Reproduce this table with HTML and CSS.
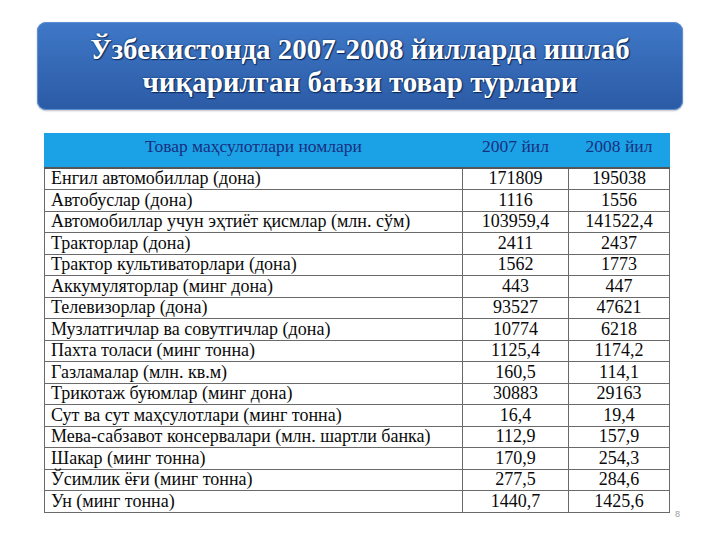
FILE: index.html
```html
<!DOCTYPE html>
<html lang="uz">
<head>
<meta charset="utf-8">
<title>Товар турлари</title>
<link rel="stylesheet" href="styles.css">
</head>
<body>
<div class="slide">
  <div class="title">Ўзбекистонда 2007-2008 йилларда ишлаб<br>чиқарилган баъзи товар турлари</div>
  <div class="tablewrap">
    <table class="data">
      <thead>
        <tr><th class="name">Товар маҳсулотлари номлари</th><th>2007 йил</th><th>2008 йил</th></tr>
      </thead>
      <tbody>
        <tr><td class="name">Енгил автомобиллар (дона)</td><td>171809</td><td>195038</td></tr>
        <tr><td class="name">Автобуслар (дона)</td><td>1116</td><td>1556</td></tr>
        <tr><td class="name">Автомобиллар учун эҳтиёт қисмлар (млн. сўм)</td><td>103959,4</td><td>141522,4</td></tr>
        <tr><td class="name">Тракторлар (дона)</td><td>2411</td><td>2437</td></tr>
        <tr><td class="name">Трактор культиваторлари (дона)</td><td>1562</td><td>1773</td></tr>
        <tr><td class="name">Аккумуляторлар (минг дона)</td><td>443</td><td>447</td></tr>
        <tr><td class="name">Телевизорлар (дона)</td><td>93527</td><td>47621</td></tr>
        <tr><td class="name">Музлатгичлар ва совутгичлар (дона)</td><td>10774</td><td>6218</td></tr>
        <tr><td class="name">Пахта толаси (минг тонна)</td><td>1125,4</td><td>1174,2</td></tr>
        <tr><td class="name">Газламалар (млн. кв.м)</td><td>160,5</td><td>114,1</td></tr>
        <tr><td class="name">Трикотаж буюмлар (минг дона)</td><td>30883</td><td>29163</td></tr>
        <tr><td class="name">Сут ва сут маҳсулотлари (минг тонна)</td><td>16,4</td><td>19,4</td></tr>
        <tr><td class="name">Мева-сабзавот консервалари (млн. шартли банка)</td><td>112,9</td><td>157,9</td></tr>
        <tr><td class="name">Шакар (минг тонна)</td><td>170,9</td><td>254,3</td></tr>
        <tr><td class="name">Ўсимлик ёғи (минг тонна)</td><td>277,5</td><td>284,6</td></tr>
        <tr><td class="name">Ун (минг тонна)</td><td>1440,7</td><td>1425,6</td></tr>
      </tbody>
    </table>
    <span class="pagenum">8</span>
  </div>
</div>
</body>
</html>
```

FILE: styles.css
```css
html, body {
  margin: 0;
  padding: 0;
  background: #ffffff;
}
body {
  width: 720px;
  height: 540px;
  overflow: hidden;
  font-family: "Liberation Serif", "Times New Roman", serif;
}
.slide {
  display: flex;
  flex-direction: column;
  padding: 22px 0 0 37px;
}
.title {
  width: 646px;
  height: 88px;
  box-sizing: border-box;
  border-radius: 9px;
  background: linear-gradient(to bottom, #3f79c8 0%, #3569b6 50%, #2c5ba5 100%);
  box-shadow: inset 0 0 0 1px #5c90d4, 0 1px 2px rgba(0,0,0,0.25);
  color: #ffffff;
  font-weight: bold;
  font-size: 29px;
  line-height: 33px;
  text-align: center;
  padding-top: 11px;
  text-shadow: 0 0 2px #0b2a5c, 1px 1px 1px #0b2a5c;
}
.tablewrap {
  position: relative;
  margin: 23px 0 0 7px;
  width: 626px;
}
.data {
  border-collapse: collapse;
  width: 626px;
  font-family: "Liberation Serif", "Times New Roman", serif;
  font-size: 18px;
  color: #0a0a0a;
}
.data th {
  background: #1ba2e6;
  color: #1a2f80;
  font-weight: normal;
  font-size: 17.5px;
  height: 34px;
  padding: 0 0 9px 0;
  box-sizing: border-box;
  line-height: 20px;
  text-align: center;
  border: 1px solid #1ba2e6;
}
.data th:first-child { width: 418px; }
.data th:nth-child(2) { width: 106px; }
.data td {
  height: 20.5px;
  padding: 0;
  line-height: 19px;
  border: 1px solid #6a6a6a;
  text-align: center;
}
.data td.name {
  text-align: left;
  padding-left: 6px;
}
.data tbody tr:first-child td {
  border-top: 2px solid #555555;
}
.pagenum {
  position: absolute;
  right: -10px;
  bottom: -6px;
  font-family: "Liberation Sans", sans-serif;
  font-size: 9px;
  color: #9a9a9a;
}
```
